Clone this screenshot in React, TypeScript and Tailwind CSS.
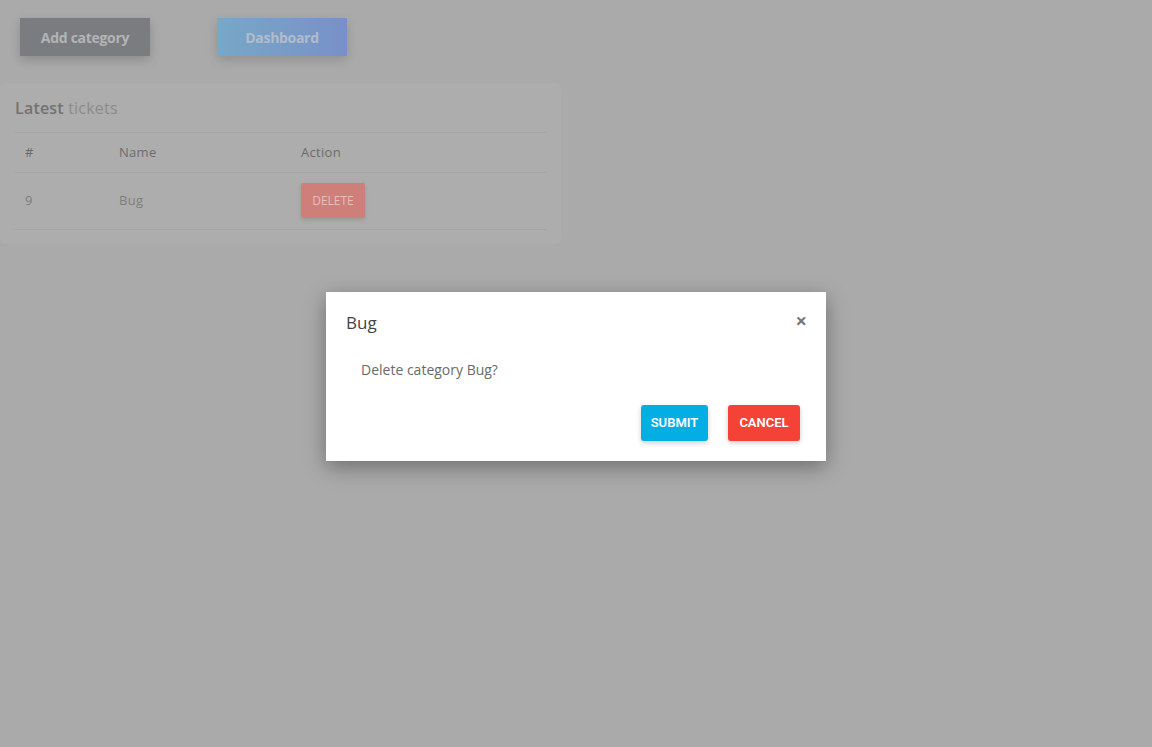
import React from 'react';

const font = { fontFamily: '"Open Sans", "Noto Sans", sans-serif' };

const App: React.FC = () => {
  return (
    <div className="relative min-h-[747px] w-full bg-[#aaaaab] text-[#6e6e6e]" style={font}>
      <div className="flex items-center gap-[67px] px-5 pt-[18px]">
        <button className="h-[38px] w-[130px] bg-[#7a7c80] text-[14px] font-bold tracking-[-0.3px] text-[#b3b4b6] shadow-[0_4px_10px_rgba(0,0,0,0.18)]">
          Add category
        </button>
        <button className="h-[38px] w-[130px] bg-gradient-to-r from-[#77a8c6] to-[#7890c8] text-[14px] font-bold tracking-[-0.3px] text-[#b2bccb] shadow-[0_4px_10px_rgba(0,0,0,0.15)]">
          Dashboard
        </button>
      </div>

      <div className="mt-[27px] w-[561px] rounded-md bg-[#adadad] px-[15px] pb-[14px] pt-[13px]">
        <h4 className="pb-[12px] text-[16px] tracking-[0.2px] text-[#8b8b8b]">
          <span className="font-semibold text-[#727272]">Latest</span> tickets
        </h4>
        <table className="w-full border-t border-[#a4a4a4] text-[13px]">
          <thead>
            <tr className="h-[40px] border-b border-[#a4a4a4] text-left text-[#6c6c6c]">
              <th className="w-[104px] pl-[10px] font-normal">#</th>
              <th className="w-[182px] font-normal tracking-[0.3px]">Name</th>
              <th className="font-normal tracking-[0.3px]">Action</th>
            </tr>
          </thead>
          <tbody>
            <tr className="h-[57px] border-b border-[#a4a4a4] text-[#7e7e7e]">
              <td className="pl-[10px]">9</td>
              <td className="tracking-[0.3px]">Bug</td>
              <td>
                <button className="mt-[-1px] h-[35px] w-[64px] rounded-[2px] bg-[#cf7f79] text-[12px] text-[#e8bdb9] shadow-[0_2px_4px_rgba(0,0,0,0.12)]">
                  DELETE
                </button>
              </td>
            </tr>
          </tbody>
        </table>
      </div>

      <div className="absolute left-[326px] top-[292px] w-[500px] bg-white px-5 pb-5 pt-[17px] shadow-[0_6px_20px_rgba(0,0,0,0.35)]">
        <div className="flex items-start justify-between">
          <h3 className="mt-[1px] text-[17px] text-[#444]">Bug</h3>
          <button className="mr-[-1px] mt-[2px] text-[20px] font-bold leading-none text-[#777]">×</button>
        </div>
        <p className="mt-[23px] pl-[15px] text-[14px] text-[#6a6a6a]">Delete category Bug?</p>
        <div className="mt-[25px] flex justify-end gap-5 pr-[6px]">
          <button
            className="h-[36px] w-[67px] rounded-[3px] bg-[#03aee4] text-[13px] font-semibold text-white shadow-[0_2px_5px_rgba(0,0,0,0.2)]"
            style={{ fontFamily: 'Roboto, sans-serif' }}
          >
            SUBMIT
          </button>
          <button
            className="h-[36px] w-[72px] rounded-[3px] bg-[#f44336] text-[13px] font-semibold text-white shadow-[0_2px_5px_rgba(0,0,0,0.2)]"
            style={{ fontFamily: 'Roboto, sans-serif' }}
          >
            CANCEL
          </button>
        </div>
      </div>
    </div>
  );
};

export default App;
